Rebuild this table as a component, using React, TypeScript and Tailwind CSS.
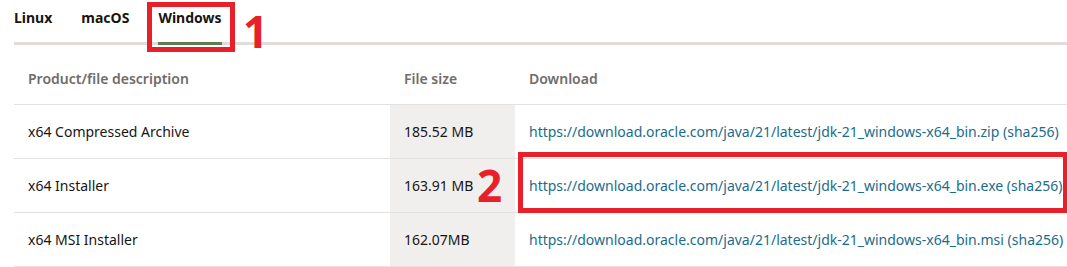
import React from 'react';

const rows = [
    { name: 'x64 Compressed Archive', size: '185.52 MB', url: 'https://download.oracle.com/java/21/latest/jdk-21_windows-x64_bin.zip' },
    { name: 'x64 Installer', size: '163.91 MB', url: 'https://download.oracle.com/java/21/latest/jdk-21_windows-x64_bin.exe' },
    { name: 'x64 MSI Installer', size: '162.07MB', url: 'https://download.oracle.com/java/21/latest/jdk-21_windows-x64_bin.msi' },
];

export default function App() {
    return (
        <div className="relative w-[1067px] h-[267px] overflow-hidden bg-white pl-[14px] font-['Noto_Sans',sans-serif] text-[14px] text-[#161513]">
            {/* OS tabs */}
            <div className="flex gap-[29px] h-[45px] border-b-[3px] border-[#e0ddd9]">
                <div className="h-[42px] pt-[7px] font-bold text-[14px]">Linux</div>
                <div className="h-[42px] pt-[7px] font-bold text-[14px]">macOS</div>
                <div className="h-[45px] pt-[7px] font-bold text-[14px] border-b-[3px] border-[#5f7d52]">Windows</div>
            </div>

            {/* Downloads table */}
            <table className="w-full border-collapse table-fixed">
                <colgroup>
                    <col className="w-[376px]" />
                    <col className="w-[125px]" />
                    <col />
                </colgroup>
                <thead>
                    <tr className="h-[59px] border-b border-[#e4e2e0]">
                        <th className="text-left font-semibold text-[#6f6c69] pl-[14px] pt-[8px]">Product/file description</th>
                        <th className="text-left font-semibold text-[#6f6c69] pl-[14px] pt-[8px]">File size</th>
                        <th className="text-left font-semibold text-[#6f6c69] pl-[14px] pt-[8px]">Download</th>
                    </tr>
                </thead>
                <tbody>
                    {rows.map((row) => (
                        <tr key={row.url} className="h-[54px] border-b border-[#e4e2e0]">
                            <td className="pl-[14px]">{row.name}</td>
                            <td className="pl-[14px] bg-[#f1efed]">{row.size}</td>
                            <td className="pl-[14px] text-[#1a6c8c] whitespace-nowrap">
                                {row.url} (sha256)
                            </td>
                        </tr>
                    ))}
                </tbody>
            </table>

            {/* Annotations */}
            <div className="absolute left-[147px] top-[2px] w-[88px] h-[50px] border-[5px] border-[#e8202a]" />
            <div className="absolute left-[243px] top-[7px] text-[44px] leading-[48px] font-bold text-[#e8202a]">1</div>
            <div className="absolute left-[518px] top-[152px] w-[550px] h-[61px] border-[5px] border-[#e8202a]" />
            <div className="absolute left-[477px] top-[161px] text-[44px] leading-[48px] font-bold text-[#e8202a]">2</div>
        </div>
    );
}
